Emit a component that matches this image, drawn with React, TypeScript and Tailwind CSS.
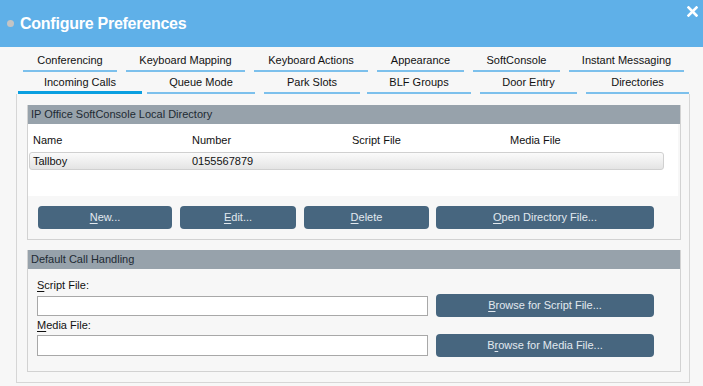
import React from "react";

const row1 = [
  { label: "Conferencing", w: "w-[94px]" },
  { label: "Keyboard Mapping", w: "w-[119px]" },
  { label: "Keyboard Actions", w: "w-[114px]" },
  { label: "Appearance", w: "w-[87px]" },
  { label: "SoftConsole", w: "w-[87px]" },
  { label: "Instant Messaging", w: "w-[115px]" },
];

function Btn({ w, first, rest, h = "h-[23px]" }: { w: string; first: string; rest: string; h?: string }) {
  return (
    <div className={`${w} ${h} rounded-[4px] bg-[#47667f] flex items-center justify-center text-[11px] text-[#e2e9ef]`}>
      <span className="underline underline-offset-[2px]">{first}</span>
      <span className="whitespace-pre">{rest}</span>
    </div>
  );
}

function BtnMid({ w, pre, u, rest }: { w: string; pre: string; u: string; rest: string }) {
  return (
    <div className={`${w} h-[23px] rounded-[4px] bg-[#47667f] flex items-center justify-center text-[11px] text-[#e2e9ef]`}>
      <span>{pre}</span>
      <span className="underline underline-offset-[2px]">{u}</span>
      <span className="whitespace-pre">{rest}</span>
    </div>
  );
}

export default function App() {
  return (
    <div
      className="w-[703px] h-[386px] bg-[#f7f7f7] overflow-hidden text-[#111111]"
      style={{ fontFamily: '"Liberation Sans", Arial, sans-serif' }}
    >
      {/* Title bar */}
      <div className="h-[47px] bg-[#5fb0e8] flex items-center relative">
        <div className="ml-[7px] w-[7px] h-[7px] rounded-full bg-[#c4c4c4]" />
        <div className="ml-[6px] text-[16px] font-bold text-white tracking-[-0.25px]">Configure Preferences</div>
        <svg className="absolute right-[5px] top-[6px]" width="11" height="11" viewBox="0 0 11 11">
          <path d="M1.5 1.5 L9.5 9.5 M9.5 1.5 L1.5 9.5" stroke="white" strokeWidth="2.6" strokeLinecap="square" />
        </svg>
      </div>

      {/* Tabs row 1 */}
      <div className="h-[25px] flex pl-[23px] gap-[9px] text-[11px]">
        {row1.map((t) => (
          <div key={t.label} className={`${t.w} flex flex-col`}>
            <div className="h-[23px] pt-[3px] flex items-center justify-center">{t.label}</div>
            <div className="h-[2px] bg-[#7cc0ec]" />
          </div>
        ))}
      </div>

      {/* Tabs row 2 */}
      <div className="h-[22px] flex pl-[18px] text-[11px] items-end">
        <div className="w-[124px] flex flex-col h-[22px]">
          <div className="flex-1 pt-[1px] flex items-center justify-center">Incoming Calls</div>
          <div className="h-[3px] bg-[#0a9fe0]" />
        </div>
        <div className="ml-[5px] w-[108px] flex flex-col h-[22px]">
          <div className="flex-1 pt-[1px] flex items-center justify-center">Queue Mode</div>
          <div className="h-[2px] bg-[#7cc0ec]" />
        </div>
        <div className="ml-[9px] w-[96px] flex flex-col h-[22px]">
          <div className="flex-1 pt-[1px] flex items-center justify-center">Park Slots</div>
          <div className="h-[2px] bg-[#7cc0ec]" />
        </div>
        <div className="ml-[7px] w-[104px] flex flex-col h-[22px]">
          <div className="flex-1 pt-[1px] flex items-center justify-center">BLF Groups</div>
          <div className="h-[2px] bg-[#7cc0ec]" />
        </div>
        <div className="ml-[9px] w-[97px] flex flex-col h-[22px]">
          <div className="flex-1 pt-[1px] flex items-center justify-center">Door Entry</div>
          <div className="h-[2px] bg-[#7cc0ec]" />
        </div>
        <div className="ml-[9px] w-[103px] flex flex-col h-[22px]">
          <div className="flex-1 pt-[1px] flex items-center justify-center">Directories</div>
          <div className="h-[2px] bg-[#7cc0ec]" />
        </div>
      </div>

      {/* Panel */}
      <div className="ml-[16px] w-[674px] border-l border-r border-b border-[#d6d6d6] pt-[11px] pb-[10px] pl-[10px]">
        {/* Section 1 */}
        <div className="w-[654px] border border-[#d2d2d2]">
          <div className="h-[19px] bg-[#97a2ab] text-[11px] text-[#1e2a33] flex items-center pl-[3px] -mt-px">
            IP Office SoftConsole Local Directory
          </div>
          <div className="h-[72px] bg-white mr-[2px]">
            <div className="h-[28px] pt-[4px] pl-[5px] flex items-center text-[11px]">
              <div className="w-[159px]">Name</div>
              <div className="w-[160px]">Number</div>
              <div className="w-[158px]">Script File</div>
              <div>Media File</div>
            </div>
            <div className="ml-[1px] w-[635px] h-[18px] rounded-[3px] border border-[#d0d0d0] bg-gradient-to-b from-[#fbfbfb] to-[#e4e4e4] flex items-center pl-[3px] text-[11px]">
              <div className="w-[159px]">Tallboy</div>
              <div>0155567879</div>
            </div>
          </div>
          <div className="mt-[10px] mb-[10px] pl-[10px] flex">
            <Btn w="w-[134px]" first="N" rest="ew..." />
            <div className="ml-[8px]"><Btn w="w-[116px]" first="E" rest="dit..." /></div>
            <div className="ml-[8px]"><Btn w="w-[125px]" first="D" rest="elete" /></div>
            <div className="ml-[7px]"><Btn w="w-[218px]" first="O" rest="pen Directory File..." /></div>
          </div>
        </div>

        {/* Section 2 */}
        <div className="mt-[10px] w-[654px] border border-[#d2d2d2] pb-[14px]">
          <div className="h-[19px] bg-[#97a2ab] text-[11px] text-[#1e2a33] flex items-center pl-[3px] -mt-px">
            Default Call Handling
          </div>
          <div className="pl-[9px] pt-[8px] text-[11px]">
            <div className="h-[17px] flex items-center">
              <span className="underline underline-offset-[2px]">S</span>cript File:
            </div>
            <div className="flex items-center h-[23px]">
              <div className="w-[391px] h-[20px] bg-white border border-[#a8a8a8]" />
              <div className="ml-[8px]"><Btn w="w-[218px]" first="B" rest="rowse for Script File..." /></div>
            </div>
            <div className="h-[17px] flex items-center">
              <span className="underline underline-offset-[2px]">M</span>edia File:
            </div>
            <div className="flex items-center h-[23px]">
              <div className="w-[391px] h-[21px] bg-white border border-[#a8a8a8]" />
              <div className="ml-[8px]"><BtnMid w="w-[218px]" pre="B" u="r" rest="owse for Media File..." /></div>
            </div>
          </div>
        </div>
      </div>
    </div>
  );
}
